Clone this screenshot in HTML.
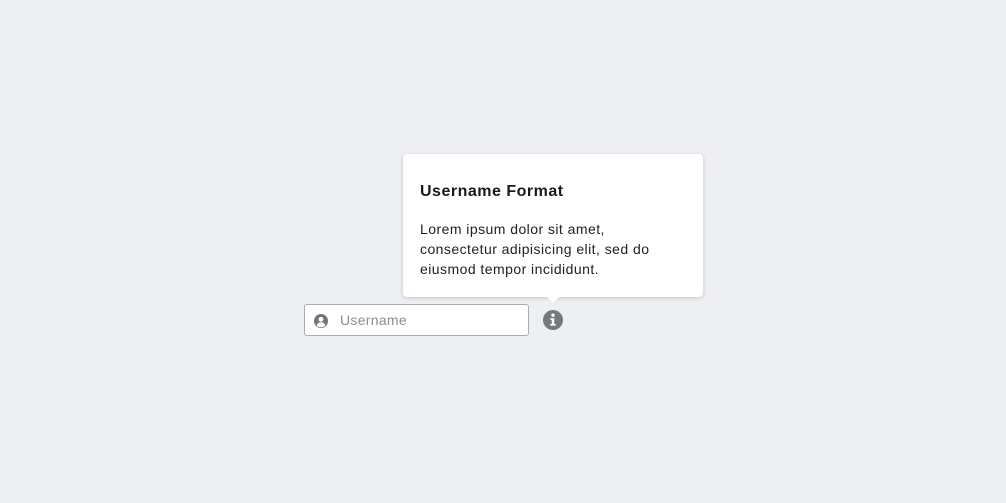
<!DOCTYPE html>
<html><head><meta charset="utf-8"><style>
html,body{margin:0;padding:0;}
body{width:1006px;height:503px;background:#eeeff3;position:relative;overflow:hidden;font-family:"Liberation Sans",sans-serif;}
.input{position:absolute;left:304px;top:304px;width:223px;height:30px;background:#fff;border:1px solid #a9abb1;border-radius:3px;box-sizing:content-box;}
.input span{position:absolute;left:35px;top:7px;font-size:14px;color:#8a8d94;letter-spacing:0.3px;}
.tip{position:absolute;left:403px;top:154px;width:300px;height:143px;background:#fff;border-radius:4px;box-shadow:0 1px 4px rgba(0,0,0,0.18);}
.tip h3{margin:0;position:absolute;left:17px;top:29px;font-size:16px;font-weight:bold;color:#1a1a1a;letter-spacing:0.5px;}
.tip p{margin:0;position:absolute;left:17px;top:65px;white-space:nowrap;font-size:14px;line-height:20px;color:#222;letter-spacing:0.45px;}
.arrow{position:absolute;left:546px;top:296px;width:0;height:0;border-left:7px solid transparent;border-right:7px solid transparent;border-top:7px solid #fff;}
</style></head><body>
<div class="tip"><h3>Username Format</h3><p>Lorem ipsum dolor sit amet,<br>consectetur adipisicing elit, sed do<br>eiusmod tempor incididunt.</p></div>
<div class="arrow"></div>
<div class="input">
<svg style="position:absolute;left:9px;top:9px" width="14" height="14" viewBox="0 0 14 14"><circle cx="7" cy="7" r="7" fill="#73767c"/><circle cx="7" cy="5.3" r="2.4" fill="#fff"/><path d="M2.8 11.6 C3.5 9 5 8.3 7 8.3 C9 8.3 10.5 9 11.2 11.6 C10 12.7 8.6 13.2 7 13.2 C5.4 13.2 4 12.7 2.8 11.6Z" fill="#fff"/></svg>
<span>Username</span></div>
<svg style="position:absolute;left:543px;top:310px" width="20" height="20" viewBox="0 0 20 20"><circle cx="10" cy="10" r="10" fill="#75787e"/><circle cx="10" cy="5.2" r="1.7" fill="#fff"/><path d="M7.3 8.3 H11.3 V14 H12.7 V15.6 H7.3 V14 H8.7 V9.9 H7.3Z" fill="#fff"/></svg>
</body></html>
